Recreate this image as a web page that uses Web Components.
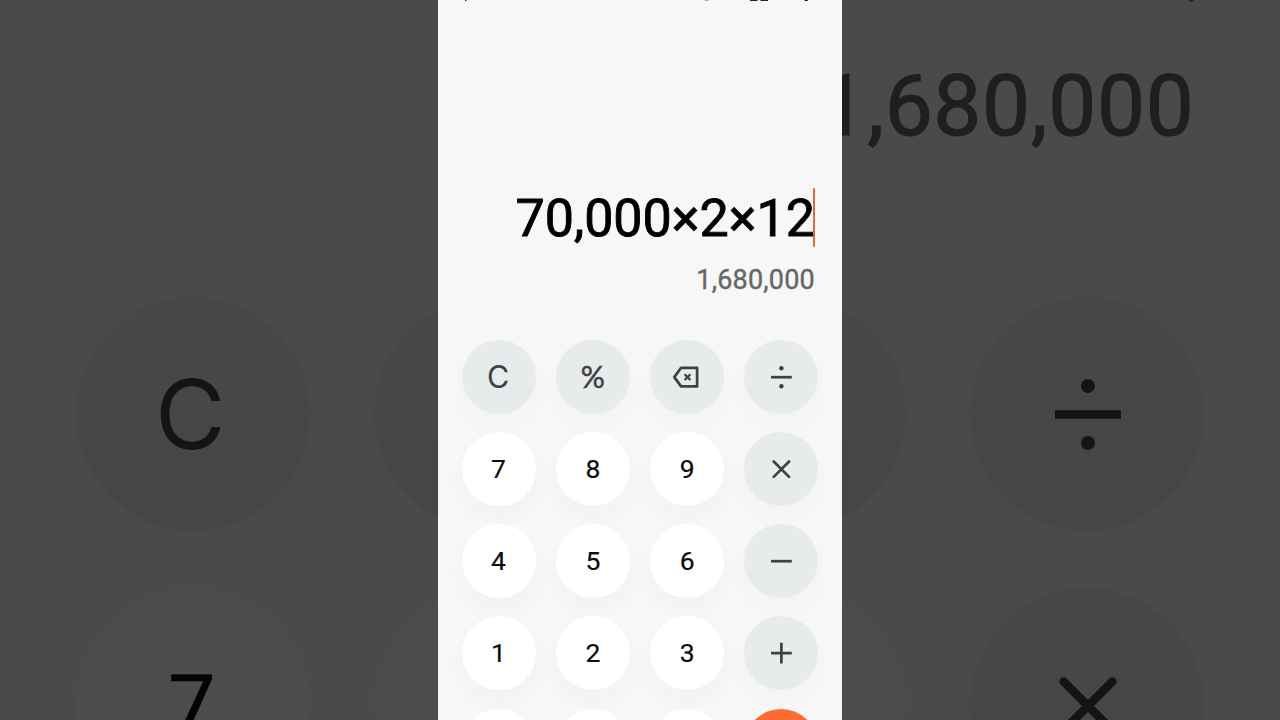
<!DOCTYPE html>
<html lang="en">
<head>
<meta charset="UTF-8">
<title>Calculator</title>
<style>
    body {
        margin: 0;
        width: 1280px;
        height: 720px;
        overflow: hidden;
        font-family: Roboto, "Liberation Sans", sans-serif;
    }

    calc-screen[slot="backdrop"] {
        --fn-face: linear-gradient(#ededed 20%, #e7eaee 60%);
    }
</style>
</head>
<body>
<calc-stage>
    <calc-screen slot="backdrop">
        <calc-display slot="display" result="1,680,000"></calc-display>
        <calc-key kind="fn" label="C"></calc-key>
        <calc-key kind="fn"></calc-key>
        <calc-key kind="fn"></calc-key>
        <calc-key kind="fn" icon="divide"></calc-key>
        <calc-key label="7"></calc-key>
        <calc-key></calc-key>
        <calc-key></calc-key>
        <calc-key kind="fn" icon="times"></calc-key>
    </calc-screen>

    <calc-screen slot="phone">
        <status-bar slot="status"></status-bar>
        <calc-display slot="display" expression="70,000×2×12" result="1,680,000"></calc-display>
        <calc-key kind="fn" label="C"></calc-key>
        <calc-key kind="fn" label="%"></calc-key>
        <calc-key kind="fn" icon="backspace"></calc-key>
        <calc-key kind="fn" icon="divide"></calc-key>
        <calc-key label="7"></calc-key>
        <calc-key label="8"></calc-key>
        <calc-key label="9"></calc-key>
        <calc-key kind="fn" icon="times"></calc-key>
        <calc-key label="4"></calc-key>
        <calc-key label="5"></calc-key>
        <calc-key label="6"></calc-key>
        <calc-key kind="fn" icon="minus"></calc-key>
        <calc-key label="1"></calc-key>
        <calc-key label="2"></calc-key>
        <calc-key label="3"></calc-key>
        <calc-key kind="fn" icon="plus"></calc-key>
        <calc-key></calc-key>
        <calc-key></calc-key>
        <calc-key></calc-key>
        <calc-key kind="equals"></calc-key>
    </calc-screen>
</calc-stage>

<script>
// The phone screen in the middle, an enlarged dark copy behind it
class CalcStage extends HTMLElement {
    constructor() {
        super();
        this.attachShadow({ mode: 'open' });
    }

    connectedCallback() {
        this.shadowRoot.innerHTML = `
            <style>
                :host {
                    display: grid;
                    justify-items: center;
                    width: 1280px;
                    height: 720px;
                    overflow: hidden;
                    background: #4a4a4a;
                }

                .layer {
                    grid-area: 1 / 1;
                    width: 404px;
                    height: 720px;
                }

                /* 1280 / 404 */
                .back {
                    transform: scale(3.168);
                    filter: brightness(0.3);
                }

                .front {
                    z-index: 1;
                }
            </style>
            <div class="layer back"><slot name="backdrop"></slot></div>
            <div class="layer front"><slot name="phone"></slot></div>
        `;
    }
}
customElements.define('calc-stage', CalcStage);

class CalcScreen extends HTMLElement {
    constructor() {
        super();
        this.attachShadow({ mode: 'open' });
    }

    connectedCallback() {
        this.shadowRoot.innerHTML = `
            <style>
                :host {
                    display: flex;
                    flex-direction: column;
                    width: 404px;
                    height: 720px;
                    overflow: hidden;
                    background: #f7f7f7;
                }

                .status {
                    flex: 0 0 4px;
                }

                .display {
                    flex: 0 0 326.8px;
                }

                .keys {
                    display: grid;
                    grid-template-columns: repeat(4, 94.3px);
                    grid-auto-rows: 92.2px;
                    place-items: center;
                    padding-left: 13.4px;
                }
            </style>
            <div class="status"><slot name="status"></slot></div>
            <div class="display"><slot name="display"></slot></div>
            <div class="keys"><slot></slot></div>
        `;
    }
}
customElements.define('calc-screen', CalcScreen);

// Only the lowest pixels of the status icons are in view
class StatusBar extends HTMLElement {
    constructor() {
        super();
        this.attachShadow({ mode: 'open' });
    }

    connectedCallback() {
        this.shadowRoot.innerHTML = `
            <style>
                :host { display: block; height: 4px; }
                svg { display: block; }
            </style>
            <svg width="404" height="4" viewBox="0 0 404 4">
                <rect x="27" y="0" width="1.5" height="1" fill="#333"/>
                <rect x="266.5" y="0" width="4" height="0.8" fill="#999"/>
                <rect x="312" y="0" width="7.5" height="1" fill="#222"/>
                <rect x="322.5" y="0" width="7.5" height="1" fill="#222"/>
                <rect x="366.7" y="0" width="3" height="1" fill="#111"/>
            </svg>
        `;
    }
}
customElements.define('status-bar', StatusBar);

class CalcDisplay extends HTMLElement {
    constructor() {
        super();
        this.attachShadow({ mode: 'open' });
    }

    connectedCallback() {
        const expression = this.getAttribute('expression') || '';
        const result = this.getAttribute('result') || '';

        this.shadowRoot.innerHTML = `
            <style>
                :host {
                    display: flex;
                    flex-direction: column;
                    align-items: flex-end;
                    padding: 184px 27px 0 0;
                }

                .expression {
                    display: flex;
                    align-items: center;
                    height: 59px;
                    font-size: 52px;
                    line-height: 61px;
                    color: #000;
                    -webkit-text-stroke: 0.9px #000;
                }

                .expression span {
                    padding-top: 2px;
                }

                .caret {
                    width: 2px;
                    height: 59px;
                    margin-left: -2px;
                    border-radius: 1px;
                    background: #d96b3c;
                }

                .result {
                    margin-top: 17px;
                    font-size: 27px;
                    line-height: 32px;
                    letter-spacing: 0.2px;
                    color: #666;
                    -webkit-text-stroke: 0.35px #666;
                }
            </style>
            <div class="expression"><span>${expression}</span><i class="caret"></i></div>
            <div class="result">${result}</div>
        `;
    }
}
customElements.define('calc-display', CalcDisplay);

const ICONS = {
    backspace: '<path d="M10.7 7.6H26.7V26.2H10.7L3.9 16.9Z" stroke-linejoin="round"/><path d="M14.2 14l5.8 5.8M20 14l-5.8 5.8" stroke-width="2.3"/>',
    divide: '<path d="M6.6 17H27.4"/><circle cx="17" cy="8" r="2.2" fill="currentColor" stroke="none"/><circle cx="17" cy="26" r="2.2" fill="currentColor" stroke="none"/>',
    times: '<path d="M9.3 9.3L24.7 24.7M24.7 9.3L9.3 24.7" stroke-linecap="round"/>',
    minus: '<path d="M6.6 17H27.4"/>',
    plus: '<path d="M6.6 17H27.4M17 6.6V27.4"/>'
};

class CalcKey extends HTMLElement {
    constructor() {
        super();
        this.attachShadow({ mode: 'open' });
    }

    connectedCallback() {
        const label = this.getAttribute('label') || '';
        const icon = ICONS[this.getAttribute('icon')];
        const face = icon
            ? `<svg width="34" height="34" viewBox="-0.4 -0.2 34 34" fill="none" stroke="currentColor" stroke-width="2.7">${icon}</svg>`
            : `<span>${label}</span>`;

        this.shadowRoot.innerHTML = `
            <style>
                :host {
                    display: flex;
                    align-items: center;
                    justify-content: center;
                    width: 74px;
                    height: 74px;
                    border-radius: 50%;
                    background: #fff;
                    box-shadow: 0 12px 12px 6px rgba(0, 0, 0, 0.016);
                    font-size: 26.5px;
                    line-height: 32px;
                    color: #0c0c0c;
                    -webkit-text-stroke: 0.2px currentColor;
                }

                :host([kind="fn"]) {
                    background: var(--fn-face, #e7ebec);
                    box-shadow: 0 12px 12px 6px rgba(0, 0, 0, 0.01);
                    font-family: Inter, Roboto, sans-serif;
                    font-size: 30.5px;
                    color: #3e4142;
                    -webkit-text-stroke-width: 0;
                }

                :host([label="C"]) span {
                    margin-right: 1px;
                }

                :host([label="%"]) {
                    font-family: Lato, Roboto, sans-serif;
                    font-size: 30px;
                    -webkit-text-stroke-width: 0.5px;
                }

                :host([label="%"]) span {
                    padding-bottom: 2px;
                }

                :host([kind="equals"]) {
                    background: #fd6b35;
                }

                svg {
                    display: block;
                }
            </style>
            ${face}
        `;
    }
}
customElements.define('calc-key', CalcKey);
</script>
</body>
</html>
